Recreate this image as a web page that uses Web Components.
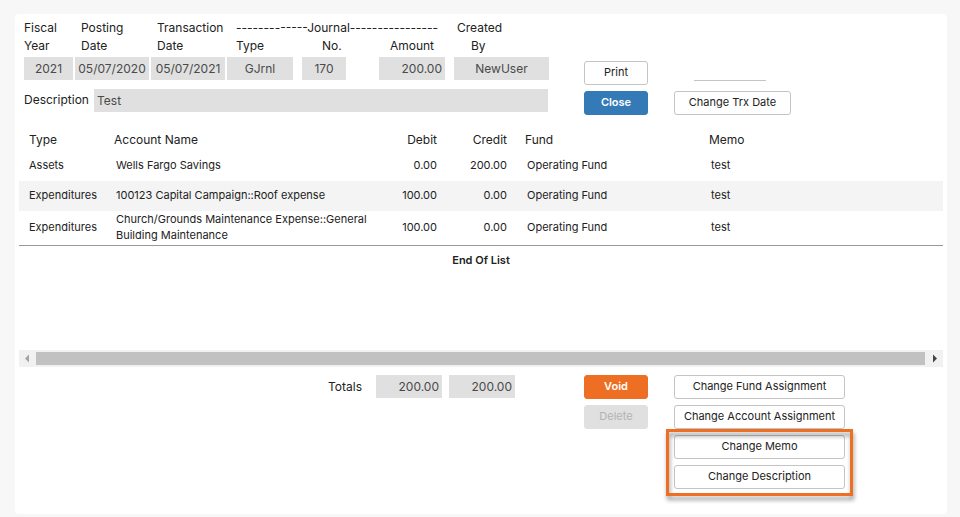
<!DOCTYPE html>
<html lang="en">
<head>
<meta charset="utf-8">
<meta name="viewport" content="width=device-width, initial-scale=1">
<title>Journal Entry</title>
<style>
  body {
    margin: 0;
    padding: 14px 13px 3px 15px;
    background: #f7f7f7;
    color: #222;
    font: 12px/18px Inter, "Liberation Sans", sans-serif;
  }
</style>
</head>
<body>
<journal-entry></journal-entry>

<script>
class EntryField extends HTMLElement {
  constructor() {
    super();
    this.attachShadow({ mode: "open" });
  }

  connectedCallback() {
    const value = this.getAttribute("value") ?? "";
    this.shadowRoot.innerHTML = `
      <style>
        :host {
          display: flex;
          flex-direction: column;
          justify-content: flex-end;
          gap: 2px;
          width: var(--field-width, 66px);
        }

        :host([inline]) {
          flex-direction: row;
          justify-content: flex-start;
          width: auto;
        }

        label {
          padding: 0 var(--label-end, 0) 0 var(--label-start, 0);
        }

        :host([align="right"]) label {
          text-align: right;
        }

        :host([inline]) label {
          flex: none;
          width: var(--label-width);
          padding: 2px 0;
        }

        input {
          box-sizing: border-box;
          width: 100%;
          min-width: 0;
          height: 23px;
          margin: 0;
          padding: 0 3px;
          border: 0;
          border-radius: 0;
          background: #e0e0e0;
          color: #4a4a4a;
          font: inherit;
          text-align: center;
          outline-offset: -1px;
        }

        :host([inline]) input {
          flex: 1;
        }

        :host([align="right"]) input {
          text-align: right;
        }

        :host([align="left"]) input {
          text-align: left;
        }
      </style>
      <label for="field"><slot></slot></label>
      <input id="field" type="text" value="${value}" readonly>
    `;
  }
}

class TotalFields extends HTMLElement {
  constructor() {
    super();
    this.attachShadow({ mode: "open" }).innerHTML = `
      <style>
        :host {
          display: flex;
          align-items: flex-start;
          justify-content: flex-end;
          gap: 7px;
        }

        label {
          padding: 3px 7px 0 0;
        }

        input {
          box-sizing: border-box;
          width: 66px;
          height: 23px;
          margin: 0;
          padding: 0 3px;
          border: 0;
          border-radius: 0;
          background: #e0e0e0;
          color: #4a4a4a;
          font: inherit;
          text-align: right;
        }
      </style>
      <label for="debit">Totals</label>
      <input id="debit" type="text" value="200.00" readonly>
      <input type="text" value="200.00" aria-label="Total credit" readonly>
    `;
  }
}

class ActionButton extends HTMLElement {
  constructor() {
    super();
    this.attachShadow({ mode: "open" });
  }

  connectedCallback() {
    this.shadowRoot.innerHTML = `
      <style>
        :host {
          display: block;
        }

        button {
          box-sizing: border-box;
          width: 100%;
          height: 24px;
          margin: 0;
          padding: 0 4px 2px;
          border: 1px solid #c4c4c4;
          border-radius: 3px;
          background: #fff;
          color: #222;
          font: inherit;
          font-size: 11px;
          line-height: 20px;
          white-space: nowrap;
          cursor: pointer;
        }

        :host([variant="primary"]) button {
          border-color: #337ab7;
          background: #337ab7;
          color: #fff;
          font-weight: 600;
        }

        :host([variant="danger"]) button {
          border-color: #ee6f23;
          background: #ee6f23;
          color: #fff;
          font-weight: 600;
        }

        button:disabled {
          border-color: #e0e0e0;
          background: #e0e0e0;
          color: #b3b3b3;
          cursor: default;
        }
      </style>
      <button type="button" ${this.hasAttribute("disabled") ? "disabled" : ""}><slot></slot></button>
    `;
  }
}

class CalloutBox extends HTMLElement {
  constructor() {
    super();
    this.attachShadow({ mode: "open" }).innerHTML = `
      <style>
        :host {
          position: relative;
          display: flex;
          flex-direction: column;
          gap: 6px;
        }

        /* hollow frame, so the shadow also falls on the buttons inside */
        .frame {
          position: absolute;
          inset: -6px -8px -7px;
          border: 3px solid #ee6f23;
          filter: drop-shadow(1px 4px 2px rgba(0, 0, 0, 0.4));
          pointer-events: none;
        }
      </style>
      <slot></slot>
      <div class="frame"></div>
    `;
  }
}

class ScrollStrip extends HTMLElement {
  constructor() {
    super();
    this.attachShadow({ mode: "open" }).innerHTML = `
      <style>
        :host {
          display: grid;
          grid-template-columns: 17px 1fr 18px;
          align-items: center;
          height: 17px;
          background: #f1f1f1;
        }

        .thumb {
          height: 13px;
          background: #c1c1c1;
        }

        svg {
          display: block;
          width: 17px;
          height: 17px;
        }
      </style>
      <svg viewBox="0 0 17 17"><path d="M10 4.500v8L6 8.500z" fill="#a3a3a3"/></svg>
      <div class="thumb"></div>
      <svg viewBox="0 0 17 17"><path d="M8 4.500v8l4-4z" fill="#444"/></svg>
    `;
  }
}

class JournalLines extends HTMLElement {
  #lines = [
    ["Assets", "Wells Fargo Savings", "0.00", "200.00", "Operating Fund", "test"],
    ["Expenditures", "100123 Capital Campaign::Roof expense", "100.00", "0.00", "Operating Fund", "test"],
    ["Expenditures", "Church/Grounds Maintenance Expense::General Building Maintenance", "100.00", "0.00", "Operating Fund", "test"],
  ];

  constructor() {
    super();
    this.attachShadow({ mode: "open" });
    this.#render();
  }

  #render() {
    const rows = this.#lines
      .map(([type, account, debit, credit, fund, memo]) => `
        <tr>
          <td class="type">${type}</td>
          <td>${account}</td>
          <td class="num">${debit}</td>
          <td class="num">${credit}</td>
          <td>${fund}</td>
          <td>${memo}</td>
        </tr>
      `)
      .join("");

    this.shadowRoot.innerHTML = `
      <style>
        :host {
          display: block;
        }

        .list {
          min-height: 221px;
        }

        table {
          width: 100%;
          table-layout: fixed;
          border-collapse: collapse;
          border-bottom: 1px solid #999;
        }

        .c-type { width: 77px; }
        .c-account { width: 279px; }
        .c-debit { width: 62px; }
        .c-credit { width: 70px; }
        .c-fund { width: 184px; }

        th {
          height: 22px;
          padding: 0 0 0 18px;
          font-weight: 400;
          text-align: left;
        }

        td {
          height: 28px;
          padding: 0 0 2px 20px;
          font-size: 11px;
          line-height: 16px;
        }

        tr:last-child td {
          height: 32px;
        }

        tbody tr:nth-child(even) {
          background: #f4f4f4;
        }

        th.type,
        td.type {
          padding-left: 10px;
        }

        th.num,
        td.num {
          padding-left: 0;
          text-align: right;
        }

        .end {
          margin: 5px 0 0;
          font-size: 11px;
          font-weight: 600;
          text-align: center;
        }
      </style>
      <div class="list">
        <table>
          <colgroup>
            <col class="c-type"><col class="c-account"><col class="c-debit">
            <col class="c-credit"><col class="c-fund"><col>
          </colgroup>
          <thead>
            <tr>
              <th class="type">Type</th>
              <th>Account Name</th>
              <th class="num">Debit</th>
              <th class="num">Credit</th>
              <th>Fund</th>
              <th>Memo</th>
            </tr>
          </thead>
          <tbody>${rows}</tbody>
        </table>
        <p class="end">End Of List</p>
      </div>
      <scroll-strip></scroll-strip>
    `;
  }
}

class JournalEntry extends HTMLElement {
  constructor() {
    super();
    this.attachShadow({ mode: "open" }).innerHTML = `
      <style>
        :host {
          display: block;
          padding: 5px 4px 25px;
          border-radius: 4px;
          background: #fff;
        }

        .band {
          display: grid;
          grid-template-columns: 565px 64px 1fr;
        }

        header {
          padding-bottom: 14px;
        }

        footer {
          padding-top: 8px;
        }

        .fields {
          display: flex;
          gap: 2px;
          padding-left: 5px;
        }

        .year { --field-width: 49px; }
        .date { --field-width: 74px; --label-start: 6px; }
        .type { --label-start: 9px; }
        .number { --field-width: 44px; --label-start: 20px; margin: 0 33px 0 9px; }
        .amount { --label-end: 11px; }
        .creator { --field-width: 95px; --label-start: 3px; margin-left: 7px; }

        .indent {
          padding-left: 14px;
        }

        .legend {
          padding-left: 9px;
          white-space: nowrap;
        }

        .group {
          display: flex;
        }

        .description {
          --label-width: 68px;
          margin: 9px 36px 0 5px;
        }

        .stack {
          display: flex;
          flex-direction: column;
          gap: 6px;
        }

        .header-actions {
          padding-top: 42px;
        }

        .trx {
          align-items: flex-start;
          gap: 10px;
          padding: 38px 0 0 26px;
        }

        .trx input {
          box-sizing: border-box;
          width: 72px;
          height: 24px;
          margin-left: 20px;
          padding: 0;
          border: 0;
          border-bottom: 1px solid #c4c4c4;
          background: transparent;
          font: inherit;
        }

        .trx action-button {
          width: 117px;
        }

        total-fields {
          padding-right: 69px;
        }

        .changes {
          width: 171px;
          padding-left: 26px;
        }
      </style>
      <header class="band">
        <div>
          <div class="fields">
            <entry-field class="year" value="2021">Fiscal<br>Year</entry-field>
            <entry-field class="date" value="05/07/2020">Posting<br>Date</entry-field>
            <entry-field class="date" value="05/07/2021">Transaction<br>Date</entry-field>
            <div>
              <div class="legend">-------------Journal----------------</div>
              <div class="group">
                <entry-field class="type" value="GJrnl">Type</entry-field>
                <entry-field class="number" value="170">No.</entry-field>
                <entry-field class="amount" value="200.00" align="right">Amount</entry-field>
              </div>
            </div>
            <entry-field class="creator" value="NewUser">Created<br><span class="indent">By</span></entry-field>
          </div>
          <entry-field class="description" value="Test" align="left" inline>Description</entry-field>
        </div>
        <div class="stack header-actions">
          <action-button>Print</action-button>
          <action-button variant="primary">Close</action-button>
        </div>
        <div class="stack trx">
          <input type="text" aria-label="New transaction date">
          <action-button>Change Trx Date</action-button>
        </div>
      </header>
      <journal-lines></journal-lines>
      <footer class="band">
        <total-fields></total-fields>
        <div class="stack">
          <action-button variant="danger">Void</action-button>
          <action-button disabled>Delete</action-button>
        </div>
        <div class="stack changes">
          <action-button>Change Fund Assignment</action-button>
          <action-button>Change Account Assignment</action-button>
          <callout-box>
            <action-button>Change Memo</action-button>
            <action-button>Change Description</action-button>
          </callout-box>
        </div>
      </footer>
    `;
  }
}

customElements.define("entry-field", EntryField);
customElements.define("total-fields", TotalFields);
customElements.define("action-button", ActionButton);
customElements.define("callout-box", CalloutBox);
customElements.define("scroll-strip", ScrollStrip);
customElements.define("journal-lines", JournalLines);
customElements.define("journal-entry", JournalEntry);
</script>
</body>
</html>
